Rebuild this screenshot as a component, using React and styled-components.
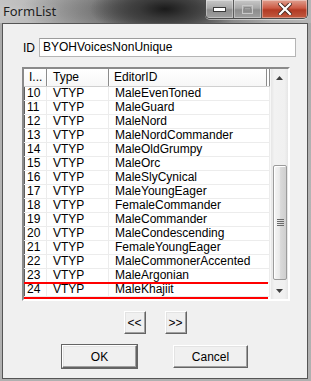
import React from "react";
import styled, { createGlobalStyle } from "styled-components";

const GlobalStyle = createGlobalStyle`
  html, body {
    margin: 0;
    padding: 0;
    background: #ffffff;
  }
`;

const rows = [
  [10, "MaleEvenToned"],
  [11, "MaleGuard"],
  [12, "MaleNord"],
  [13, "MaleNordCommander"],
  [14, "MaleOldGrumpy"],
  [15, "MaleOrc"],
  [16, "MaleSlyCynical"],
  [17, "MaleYoungEager"],
  [18, "FemaleCommander"],
  [19, "MaleCommander"],
  [20, "MaleCondescending"],
  [21, "FemaleYoungEager"],
  [22, "MaleCommonerAccented"],
  [23, "MaleArgonian"],
  [24, "MaleKhajiit"],
];

const Window = styled.div`
  width: 311px;
  height: 381px;
  display: flex;
  flex-direction: column;
  background: linear-gradient(180deg, #a8a8a8 0%, #b4b4b4 50%, #b0b0b0 100%);
  overflow: hidden;
`;

const TitleBar = styled.div`
  height: 23px;
  flex: none;
  display: flex;
  justify-content: space-between;
  background:
    radial-gradient(ellipse 75px 28px at 165px 9px, #1a1a1a 0%, #3a3a3a 35%, rgba(80, 80, 80, 0) 100%),
    radial-gradient(ellipse 130px 32px at 150px 10px, rgba(55, 55, 55, 0.75) 0%, rgba(60, 60, 60, 0) 100%),
    linear-gradient(90deg, #c4c4c4 0%, #a9a9a9 30%, #8c8c8c 55%, #9a9a9a 70%, #b6b6b6 100%);
`;

const Title = styled.div`
  font-family: "Noto Sans", "Open Sans", sans-serif;
  font-size: 13px;
  color: #1e1e1e;
  padding: 2px 0 0 3px;
  text-shadow: 0 0 6px rgba(255, 255, 255, 0.45);
`;

const CaptionGroup = styled.div`
  display: flex;
  height: 18px;
  margin-right: 3px;
  border: 1px solid #4a4a4a;
  border-top: none;
  border-radius: 0 0 5px 5px;
  overflow: hidden;
  box-shadow: 0 1px 0 rgba(255, 255, 255, 0.5);
`;

const CaptionButton = styled.div`
  width: ${(p) => p.$w}px;
  display: flex;
  align-items: center;
  justify-content: center;
  border-left: ${(p) => (p.$first ? "none" : "1px solid #5a5a5a")};
  box-shadow: inset 0 0 0 1px rgba(255, 255, 255, 0.35);
  background: ${(p) =>
    p.$close
      ? "linear-gradient(180deg, #e0a090 0%, #cc5a44 45%, #b23a24 55%, #c25a40 100%)"
      : "linear-gradient(180deg, #c8c8c8 0%, #a8a8a8 45%, #8c8c8c 55%, #a0a0a0 100%)"};
`;

const Client = styled.div`
  flex: 1;
  margin: 0 3px 2px 2px;
  border: 1px solid #555555;
  background: #f0f0f0;
  display: flex;
  flex-direction: column;
  padding: 14px 0 0 19px;
  font-family: "Liberation Sans", Arial, sans-serif;
  font-size: 12px;
  color: #000000;
`;

const IdRow = styled.div`
  display: flex;
  align-items: center;
  height: 19px;
  margin-left: 1px;
`;

const IdLabel = styled.div`
  width: 16px;
`;

const IdInput = styled.div`
  width: 252px;
  height: 17px;
  line-height: 17px;
  padding-left: 3px;
  background: #ffffff;
  border: 1px solid #b5b5b5;
  border-top-color: #9c9c9c;
`;

const ListBox = styled.div`
  margin-top: 10px;
  width: 264px;
  height: 230px;
  display: flex;
  border-style: solid;
  border-width: 2px;
  border-color: #8a8a8a #ffffff #ffffff #8a8a8a;
  box-shadow: inset 1px 1px 0 #5e5e5e;
  background: #ffffff;
`;

const Columns = styled.div`
  flex: 1;
  display: flex;
  flex-direction: column;
  overflow: hidden;
`;

const HeaderRow = styled.div`
  display: flex;
  height: 18px;
  flex: none;
  background: linear-gradient(180deg, #ffffff 0%, #f7f7f7 100%);
  border-bottom: 1px solid #d0d0d0;
  box-sizing: border-box;
`;

const HeaderCell = styled.div`
  width: ${(p) => p.$w}px;
  flex: none;
  box-sizing: border-box;
  padding-left: ${(p) => p.$pad}px;
  line-height: 17px;
  border-right: 1px solid #8c8c8c;
  box-shadow: ${(p) => (p.$double ? "2px 0 0 #ffffff, 3px 0 0 #8c8c8c" : "1px 0 0 #ffffff")};
  white-space: nowrap;
  overflow: hidden;
`;

const Row = styled.div`
  position: relative;
  display: flex;
  height: 14px;
  flex: none;
  box-sizing: border-box;
  border-bottom: 1px solid #ececec;

  ${(p) =>
    p.$marked &&
    `
    &::before, &::after {
      content: "";
      position: absolute;
      left: -2px;
      width: 246px;
      height: 2px;
      background: #ff0000;
    }
    &::before { top: -1px; }
    &::after { bottom: -3px; }
  `}
`;

const Cell = styled.div`
  width: ${(p) => p.$w}px;
  flex: none;
  box-sizing: border-box;
  padding-left: ${(p) => p.$pad}px;
  line-height: 13px;
  border-right: 1px solid #ececec;
  white-space: nowrap;
  overflow: hidden;
`;

const ScrollBar = styled.div`
  width: 17px;
  flex: none;
  display: flex;
  flex-direction: column;
  background: linear-gradient(90deg, #e6e6e6 0%, #f2f2f2 20%, #f0f0f0 80%, #e6e6e6 100%);
  border-left: 1px solid #f7f7f7;
`;

const ArrowButton = styled.div`
  height: 17px;
  flex: none;
  display: flex;
  align-items: center;
  justify-content: center;
`;

const Track = styled.div`
  flex: 1;
  display: flex;
  flex-direction: column;
  padding: 79px 1px 2px 2px;
`;

const Thumb = styled.div`
  height: 113px;
  border: 1px solid #9b9b9b;
  border-radius: 2px;
  background: linear-gradient(90deg, #f6f6f6 0%, #eaeaea 45%, #d9d9d9 55%, #cfcfcf 100%);
  box-shadow: inset 1px 1px 0 #ffffff;
  display: flex;
  align-items: center;
  justify-content: center;
`;

const ButtonRow = styled.div`
  display: flex;
  justify-content: center;
  gap: ${(p) => p.$gap}px;
  margin-top: ${(p) => p.$top}px;
  margin-left: -19px;
`;

const Button = styled.div`
  width: ${(p) => p.$w}px;
  height: 23px;
  box-sizing: border-box;
  display: flex;
  align-items: center;
  justify-content: center;
  background: #f0f0f0;
  border: 1px solid;
  border-color: #ffffff #646464 #646464 #ffffff;
  box-shadow: inset -1px -1px 0 #a0a0a0, inset 1px 1px 0 #e3e3e3;
  outline: ${(p) => (p.$default ? "1px solid #646464" : "none")};
`;

const Arrow = ({ up }) => (
  <svg width="7" height="4" viewBox="0 0 7 4">
    <path d={up ? "M3.5 0 L7 4 L0 4 Z" : "M0 0 L7 0 L3.5 4 Z"} fill="#404040" />
  </svg>
);

const Grip = () => (
  <svg width="7" height="8" viewBox="0 0 7 8">
    {[0, 2, 4, 6].map((y) => (
      <rect key={y} x="0" y={y} width="7" height="1" fill="#6a6a6a" />
    ))}
  </svg>
);

const App = () => {
  return (
    <>
      <GlobalStyle />
      <Window>
        <TitleBar>
          <Title>FormList</Title>
          <CaptionGroup>
            <CaptionButton $w={27} $first>
              <svg width="13" height="5" viewBox="0 0 13 5">
                <rect x="0.5" y="0.5" width="12" height="4" fill="#ffffff" stroke="#3a3a3a" />
              </svg>
            </CaptionButton>
            <CaptionButton $w={27}>
              <svg width="11" height="9" viewBox="0 0 11 9">
                <rect x="0.5" y="0.5" width="10" height="8" fill="none" stroke="#c8c8c8" />
                <rect x="2.5" y="2.5" width="6" height="4" fill="none" stroke="#8a8a8a" />
              </svg>
            </CaptionButton>
            <CaptionButton $w={45} $close>
              <svg width="14" height="12" viewBox="0 0 14 12">
                <path d="M2 1 L12 11 M12 1 L2 11" stroke="#4a2a22" strokeWidth="4" strokeLinecap="square" />
                <path d="M2 1 L12 11 M12 1 L2 11" stroke="#ffffff" strokeWidth="2.2" strokeLinecap="square" />
              </svg>
            </CaptionButton>
          </CaptionGroup>
        </TitleBar>
        <Client>
          <IdRow>
            <IdLabel>ID</IdLabel>
            <IdInput>BYOHVoicesNonUnique</IdInput>
          </IdRow>
          <ListBox>
            <Columns>
              <HeaderRow>
                <HeaderCell $w={23} $pad={5}>I...</HeaderCell>
                <HeaderCell $w={62} $pad={6}>Type</HeaderCell>
                <HeaderCell $w={158} $pad={5} $double>EditorID</HeaderCell>
              </HeaderRow>
              {rows.map(([n, id]) => (
                <Row key={n} $marked={n === 24}>
                  <Cell $w={23} $pad={3}>{n}</Cell>
                  <Cell $w={62} $pad={6}>VTYP</Cell>
                  <Cell $w={161} $pad={6}>{id}</Cell>
                </Row>
              ))}
            </Columns>
            <ScrollBar>
              <ArrowButton>
                <Arrow up />
              </ArrowButton>
              <Track>
                <Thumb>
                  <Grip />
                </Thumb>
              </Track>
              <ArrowButton>
                <Arrow />
              </ArrowButton>
            </ScrollBar>
          </ListBox>
          <ButtonRow $gap={19} $top={10}>
            <Button $w={22}>&lt;&lt;</Button>
            <Button $w={22}>&gt;&gt;</Button>
          </ButtonRow>
          <ButtonRow $gap={36} $top={11}>
            <Button $w={75} $default>OK</Button>
            <Button $w={75}>Cancel</Button>
          </ButtonRow>
        </Client>
      </Window>
    </>
  );
};

export default App;
